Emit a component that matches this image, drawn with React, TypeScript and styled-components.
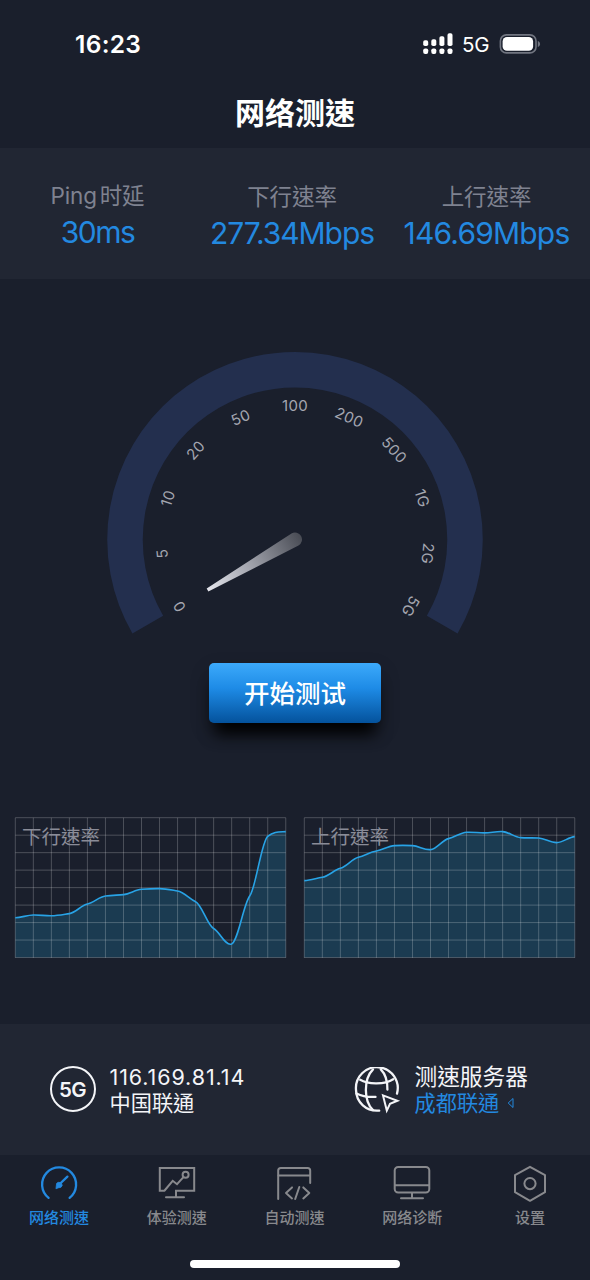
import React from "react";
import styled, { createGlobalStyle } from "styled-components";

const c = {
  bg: "#1a1f2c",
  panel: "#212633",
  blue: "#2389e0",
  muted: "#7f8290",
  tab: "#88898d",
  white: "#ffffff",
};

const Global = createGlobalStyle`
  * { box-sizing: border-box; }
  body {
    margin: 0;
    background: ${c.bg};
    font-family: Inter, "Noto Sans CJK TC", sans-serif;
    color: ${c.white};
  }
  svg { display: block; }
`;

const Screen = styled.div`
  width: 590px;
  height: 1280px;
  display: flex;
  flex-direction: column;
  background: ${c.bg};
  overflow: hidden;
  white-space: nowrap;
`;

const StatusBar = styled.header`
  height: 76px;
  padding: 12px 49px 0 75px;
  display: flex;
  align-items: center;
  justify-content: space-between;
`;

const Clock = styled.span`
  font-size: 24.5px;
  line-height: 30px;
  font-weight: 600;
  letter-spacing: 0.3px;
`;

const StatusIcons = styled.div`
  display: flex;
  align-items: center;
`;

const Network = styled.span`
  width: 45px;
  padding-left: 8px;
  padding-top: 1px;
  font-size: 20.5px;
  line-height: 26px;
  letter-spacing: -0.3px;
`;

const TitleBar = styled.div`
  height: 72px;
  padding-top: 2px;
  display: flex;
  justify-content: center;
  align-items: center;
`;

const Title = styled.h1`
  margin: 0;
  font-size: 30px;
  line-height: 44px;
  font-weight: 700;
`;

const Stats = styled.section`
  height: 131px;
  padding: 32px 6px 0 0;
  display: grid;
  grid-template-columns: 195px 194px 195px;
  background: ${c.panel};
`;

const Stat = styled.div<{ $raised?: boolean }>`
  display: flex;
  flex-direction: column;
  align-items: center;
  padding-top: ${(p) => (p.$raised ? 0 : 1)}px;
`;

const StatLabel = styled.span`
  font-size: 22.5px;
  line-height: 31px;
  font-weight: 400;
  color: ${c.muted};
  word-spacing: -3.5px;
  letter-spacing: -0.1px;
`;

const StatValue = styled.span<{ $track: number }>`
  font-size: 30px;
  line-height: 42px;
  font-weight: 400;
  color: ${c.blue};
  letter-spacing: ${(p) => p.$track}px;
`;

const GaugeArea = styled.section`
  height: 384px;
  padding-top: 60px;
  display: flex;
  justify-content: center;
`;

const ButtonArea = styled.div`
  height: 154px;
  display: flex;
  justify-content: center;
  align-items: flex-start;
`;

const StartButton = styled.button`
  width: 172px;
  height: 60px;
  padding: 2px 0 0;
  border: 0;
  border-radius: 5px;
  background: linear-gradient(180deg, #3caafb 0%, #1e8be6 42%, #04529c 100%);
  box-shadow: 0 17px 16px -6px #000, 0 8px 20px rgba(0, 0, 0, 0.2);
  color: ${c.white};
  font: 500 25.5px/36px Inter, "Noto Sans CJK TC", sans-serif;
`;

const Charts = styled.section`
  height: 207px;
  padding: 0 14px;
  display: flex;
  justify-content: space-between;
`;

const ChartBox = styled.figure`
  position: relative;
  margin: 0;
  width: 273px;
  height: 142px;
`;

const ChartLabel = styled.figcaption`
  position: absolute;
  left: 8px;
  top: 6px;
  font-size: 19.5px;
  line-height: 28px;
  font-weight: 400;
  color: #8a8c98;
`;

const Info = styled.section`
  height: 131px;
  display: flex;
  align-items: flex-start;
  background: ${c.panel};
`;

const InfoItem = styled.div<{ $left: number; $width: number }>`
  width: ${(p) => p.$width}px;
  padding: 40px 0 0 ${(p) => p.$left}px;
  display: flex;
  gap: 14px;
`;

const Badge = styled.div`
  width: 46px;
  height: 46px;
  margin-top: 2px;
  border: 2px solid #f4f5f8;
  border-radius: 50%;
  display: flex;
  justify-content: center;
  align-items: center;
  font-size: 20.5px;
  font-weight: 600;
  letter-spacing: -0.5px;
  color: #f4f5f8;
`;

const Lines = styled.div`
  display: flex;
  flex-direction: column;
`;

const Line = styled.span<{ $size: number; $blue?: boolean; $track?: number }>`
  height: 26px;
  display: flex;
  align-items: center;
  gap: 8px;
  font-size: ${(p) => p.$size}px;
  line-height: 26px;
  font-weight: 400;
  letter-spacing: ${(p) => p.$track ?? 0}px;
  color: ${(p) => (p.$blue ? c.blue : "#f4f5f8")};
`;

const TabBar = styled.nav`
  height: 105px;
  padding-right: 1px;
  display: grid;
  grid-template-columns: repeat(5, 1fr);
  align-content: start;
`;

const Tab = styled.div<{ $active?: boolean }>`
  padding-top: 9px;
  display: flex;
  flex-direction: column;
  align-items: center;
  color: ${(p) => (p.$active ? c.blue : c.tab)};
`;

const TabLabel = styled.span`
  margin-top: 3px;
  font-size: 15px;
  line-height: 22px;
  font-weight: 500;
`;

const HomeRow = styled.div`
  height: 20px;
  display: flex;
  justify-content: center;
`;

const HomeIndicator = styled.div`
  width: 210px;
  height: 8px;
  border-radius: 4px;
  background: ${c.white};
`;

const GlobeSvg = styled.svg`
  margin-top: 3px;
`;

function Signal() {
  const tops = [7, 6, 3, 0];
  return (
    <svg width="31" height="22" viewBox="0 0 31 22" fill="#fff">
      {tops.map((t, i) => (
        <React.Fragment key={i}>
          <rect x={0.2 + i * 8.1} y={t + 0.3} width="5" height={12.7 - t} rx="1.8" />
          <rect x={0.2 + i * 8.1} y="15.4" width="5" height="5.6" rx="1.9" />
        </React.Fragment>
      ))}
    </svg>
  );
}

function Battery() {
  return (
    <svg width="42" height="20" viewBox="0 0 42 20">
      <rect x="1.4" y="0.9" width="35.6" height="18" rx="6" fill="none" stroke="#717580" strokeWidth="1.6" />
      <rect x="3.6" y="3" width="30.5" height="13.8" rx="4.4" fill="#fff" />
      <path d="M38.8 7v6c1.5-.6 2.3-1.7 2.3-3s-.8-2.4-2.3-3z" fill="#717580" />
    </svg>
  );
}

const marks = ["0", "5", "10", "20", "50", "100", "200", "500", "1G", "2G", "5G"];

function Gauge() {
  return (
    <svg width="400" height="310" viewBox="95 339 400 310">
      <defs>
        <linearGradient id="needle" x1="0" y1="0" x2="1" y2="0">
          <stop offset="0" stopColor="#e4e5ec" />
          <stop offset="0.45" stopColor="#a2a4ad" />
          <stop offset="1" stopColor="#484b54" />
        </linearGradient>
      </defs>
      <path
        d="M147.8 624.7 A170 170 0 1 1 442.2 624.7"
        fill="none"
        stroke="#232f4e"
        strokeWidth="35.5"
      />
      <g fill="#a4a6b0" fontSize="15" textAnchor="middle">
        {marks.map((m, i) => (
          <text key={m} x="295" y="411.3" letterSpacing="0.4" transform={`rotate(${i * 24 - 120} 295 539.5)`}>
            {m}
          </text>
        ))}
      </g>
      <path
        d="M194 537.8 L295 532.5 A7 7 0 0 1 295 546.5 L194 541.2 Z"
        fill="url(#needle)"
        transform="rotate(-30 295 539.5)"
      />
    </svg>
  );
}

const STEP = 18.03;

function smooth(ys: number[]) {
  let d = `M1.3 ${ys[0]}`;
  for (let i = 1; i < ys.length; i++) {
    const x0 = 1.3 + (i - 1) * STEP;
    const x1 = x0 + STEP;
    const before = ys[Math.max(i - 2, 0)];
    const after = ys[Math.min(i + 1, ys.length - 1)];
    const y0 = ys[i - 1];
    const y1 = ys[i];
    const c0 = y0 + (y1 - before) * 0.08;
    const c1 = y1 - (after - y0) * 0.08;
    d += ` C${x0 + STEP * 0.35} ${c0} ${x1 - STEP * 0.35} ${c1} ${x1} ${y1}`;
  }
  return d;
}

function Chart({ label, data }: { label: string; data: number[] }) {
  const line = smooth(data);
  const right = 1.3 + 15 * STEP;
  return (
    <ChartBox>
      <svg width="273" height="142" viewBox="0 0 273 142">
        <path d={`${line} L${right} 140.6 L1.3 140.6 Z`} fill="#1b3b51" />
        <g stroke="#fff" strokeOpacity="0.22" strokeWidth="1">
          {Array.from({ length: 16 }, (_, i) => (
            <line key={i} x1={1.3 + i * STEP} x2={1.3 + i * STEP} y1="0.8" y2="140.8" />
          ))}
          {Array.from({ length: 9 }, (_, i) => (
            <line key={i} x1="1.3" x2={right} y1={0.7 + i * 17.48} y2={0.7 + i * 17.48} />
          ))}
        </g>
        <path d={line} fill="none" stroke="#28a3e6" strokeWidth="1.6" />
      </svg>
      <ChartLabel>{label}</ChartLabel>
    </ChartBox>
  );
}

const down = [100.7, 98, 98.8, 96.6, 87, 79, 77.6, 72.3, 71.6, 74, 84.7, 111.5, 127, 79, 19.3, 14.6];
const up = [63.6, 60.3, 51.3, 40.3, 34, 28.6, 28.6, 32.6, 21.6, 15.3, 15.9, 14.6, 20.6, 21, 25.6, 19.6];

function Globe() {
  return (
    <GlobeSvg width="47" height="47" viewBox="0 0 47 47" fill="none" stroke="#f4f5f8" strokeWidth="2.3" strokeLinecap="round" strokeLinejoin="round">
      <path d="M25.2 43.6 C12.5 44.8 2 35.2 2 22.8 A20.9 20.9 0 1 1 43 26.6" />
      <path d="M19 43 C9.5 34 9.5 12 19 2.4" />
      <path d="M26.8 2.4 C31.8 7.5 33.6 14.5 33.4 22.6" />
      <path d="M6.2 12.8 C14 17.6 31 17.6 39.2 12.2" />
      <path d="M2.5 26.4 C8 29.2 15 30.2 21.5 29.8" />
      <path d="M29 28.4 L43.4 33.8 L36 36.8 L32.8 43.6 Z" strokeWidth="2" strokeLinejoin="miter" />
    </GlobeSvg>
  );
}

const iconProps = {
  width: 40,
  height: 40,
  viewBox: "0 0 40 40",
  fill: "none",
  stroke: "currentColor",
  strokeWidth: 2,
  strokeLinecap: "round" as const,
  strokeLinejoin: "round" as const,
};

const SpeedIcon = () => (
  <svg {...iconProps}>
    <path d="M9.6 33.8 A17 17 0 1 1 30.6 33.8" strokeWidth="2.3" />
    <path d="M20.2 20.5 L28.4 12.6" strokeWidth="2.3" />
    <path d="M17 24.4 L17.6 19.4 A3.2 3.2 0 0 1 23.2 21.5 Q22.4 24 20 23.8 Z" fill="currentColor" strokeWidth="0.8" />
  </svg>
);

const ExperienceIcon = () => (
  <svg {...iconProps} strokeLinejoin="miter">
    <path d="M7.5 26.7 H2.8 V4 H37.2 V26.7 H19 V33" />
    <path d="M9 33.3 H27" />
    <path d="M8 26 L15.7 16.8 L20 20.2 L26.2 13.4" />
    <circle cx="28.6" cy="10.8" r="3" />
  </svg>
);

const AutoIcon = () => (
  <svg {...iconProps}>
    <path d="M4.2 35 V6.6 Q4.2 4 6.8 4 H33.6 Q36.2 4 36.2 6.6 V19" />
    <path d="M4.5 11.6 H36" />
    <path d="M18 23.4 L12 28.9 L18 34.4" />
    <path d="M25.3 23 L21.2 35" />
    <path d="M29.3 23.4 L35.3 28.9 L29.3 34.4" />
  </svg>
);

const DiagnoseIcon = () => (
  <svg {...iconProps}>
    <rect x="2.7" y="3" width="34.6" height="25.6" rx="3.5" />
    <path d="M3 21.3 H37 M20 29 V34 M9 34.3 H31" />
  </svg>
);

const SettingsIcon = () => (
  <svg {...iconProps}>
    <path d="M20 2.8 L35 11.2 V28.2 L20 36.8 L5 28.2 V11.2 Z" />
    <circle cx="20" cy="19.6" r="5.6" />
  </svg>
);

const tabs = [
  { label: "网络测速", Icon: SpeedIcon, active: true },
  { label: "体验测速", Icon: ExperienceIcon },
  { label: "自动测速", Icon: AutoIcon },
  { label: "网络诊断", Icon: DiagnoseIcon },
  { label: "设置", Icon: SettingsIcon },
];

export default function App() {
  return (
    <Screen lang="zh-HK">
      <Global />
      <StatusBar>
        <Clock>16:23</Clock>
        <StatusIcons>
          <Signal />
          <Network>5G</Network>
          <Battery />
        </StatusIcons>
      </StatusBar>
      <TitleBar>
        <Title>网络测速</Title>
      </TitleBar>
      <Stats>
        <Stat $raised>
          <StatLabel>Ping 时延</StatLabel>
          <StatValue $track={-1.5}>30ms</StatValue>
        </Stat>
        <Stat>
          <StatLabel>下行速率</StatLabel>
          <StatValue $track={-1.05}>277.34Mbps</StatValue>
        </Stat>
        <Stat>
          <StatLabel>上行速率</StatLabel>
          <StatValue $track={-0.8}>146.69Mbps</StatValue>
        </Stat>
      </Stats>
      <GaugeArea>
        <Gauge />
      </GaugeArea>
      <ButtonArea>
        <StartButton>开始测试</StartButton>
      </ButtonArea>
      <Charts>
        <Chart label="下行速率" data={down} />
        <Chart label="上行速率" data={up} />
      </Charts>
      <Info>
        <InfoItem $left={49.5} $width={353.5}>
          <Badge>5G</Badge>
          <Lines>
            <Line $size={21.5} $track={0.9}>116.169.81.14</Line>
            <Line $size={21.2}>中国联通</Line>
          </Lines>
        </InfoItem>
        <InfoItem $left={0} $width={236}>
          <Globe />
          <Lines>
            <Line $size={22.7}>测速服务器</Line>
            <Line $size={21.2} $blue>
              成都联通
              <svg width="8" height="12" viewBox="0 0 8 12" fill="none" stroke="currentColor">
                <path d="M6 1.5 V10.5 L1.2 6 Z" />
              </svg>
            </Line>
          </Lines>
        </InfoItem>
      </Info>
      <TabBar>
        {tabs.map(({ label, Icon, active }) => (
          <Tab key={label} $active={active}>
            <Icon />
            <TabLabel>{label}</TabLabel>
          </Tab>
        ))}
      </TabBar>
      <HomeRow>
        <HomeIndicator />
      </HomeRow>
    </Screen>
  );
}
